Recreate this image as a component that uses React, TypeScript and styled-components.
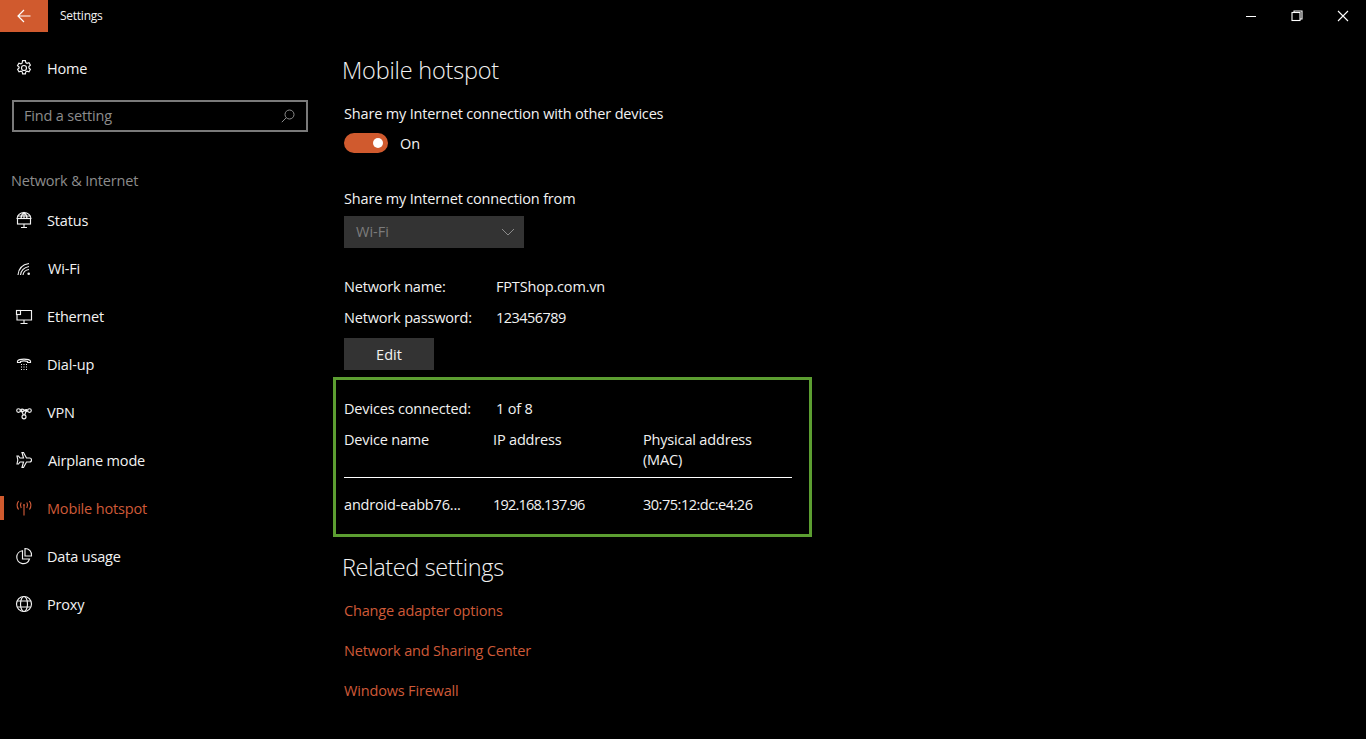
import React from 'react';
import styled, { createGlobalStyle } from 'styled-components';

const ACCENT = '#d05a2e';
const LINK = '#cf5a38';
const WHITE = '#f2f2f2';
const GRAY = '#8c8c8c';
const FONT = '"Open Sans", "Noto Sans", sans-serif';

const GlobalStyle = createGlobalStyle`
  html, body {
    margin: 0;
    height: 100%;
    background: #000;
  }
  body {
    font-family: ${FONT};
    font-size: 14px;
    color: ${WHITE};
    overflow: hidden;
  }
  * {
    box-sizing: border-box;
  }
`;

const Icon = ({ children }: { children: React.ReactNode }) => (
  <IconSvg viewBox="0 0 16 16" fill="none" stroke="currentColor" strokeWidth="1.150">
    {children}
  </IconSvg>
);

const GEAR =
  'M6.600 .600h2.800l.4 2 1.200.7 2-.6 1.400 2.400-1.500 1.400v1.400l1.500 1.400-1.400 2.400-2-.6-1.200.7-.4 2H6.600l-.4-2-1.200-.7-2 .6-1.400-2.400 1.500-1.400V7.100L1.500 5.700l1.400-2.400 2 .6 1.200-.7z';

const navItems: { label: string; icon: React.ReactNode; active?: boolean; offset?: number }[] = [
  {
    label: 'Status',
    icon: (
      <>
        <path d="M1 7a7 6.500 0 0 1 14 0" />
        <path d="M8 .500v6M1.500 4h13M5 6.500c0-2.500 1-4.500 3-6 2 1.500 3 3.500 3 6" />
        <rect x="1.500" y="6.500" width="13" height="5.500" />
        <path d="M8 12v3M5 15.500h6" />
      </>
    ),
  },
  {
    label: 'Wi-Fi',
    offset: 1,
    icon: (
      <>
        <path d="M2 15C2.500 9 6.500 4.500 13 3.500" />
        <path d="M4.500 15C5 11 8 7.500 13 6.500" />
        <path d="M7 15c.300-2.500 2.500-5 6-5.500" />
        <circle cx="12.700" cy="13.800" r="1.300" fill="currentColor" stroke="none" />
      </>
    ),
  },
  {
    label: 'Ethernet',
    icon: (
      <>
        <path d="M4.500 2.500h11v9.500H1V7" />
        <rect x=".500" y="2.500" width="4" height="4" />
        <path d="M8 12v3M4.500 15.500h7" />
      </>
    ),
  },
  {
    label: 'Dial-up',
    icon: (
      <>
        <path d="M1.500 6.500V5C3 2.500 13 2.500 14.500 5v1.500h-3V5.500c-2-.7-5-.7-7 0v1h-3z" />
        <path d="M5 8.500h1M7.500 8.500h1M10 8.500h1M5 11h1M7.500 11h1M10 11h1M5 13.500h1M7.500 13.500h1M10 13.500h1" />
      </>
    ),
  },
  {
    label: 'VPN',
    icon: (
      <>
        <circle cx="2.500" cy="6.500" r="1.800" />
        <circle cx="13.500" cy="6.500" r="1.800" />
        <circle cx="8" cy="12.800" r="2" />
        <path d="M4.300 7C6 8.500 7 7.800 8 6.800S10 5 11.700 6M4.300 6C6 4.500 7 5 8 6s2 2.300 3.700 1M5.500 6l1.800 5M10.500 6l-1.800 5" />
      </>
    ),
  },
  {
    label: 'Airplane mode',
    offset: 1,
    icon: (
      <path d="M6 .500h1.500l3 5.500h3c1 0 2 .9 2 2s-1 2-2 2h-3l-3 5.500H6L7.500 10H4l-1.500 2H1l.8-4L1 4h1.500L4 6h3.500z" />
    ),
  },
  {
    label: 'Mobile hotspot',
    active: true,
    icon: (
      <>
        <path d="M8 5.500v10" />
        <circle cx="8" cy="5" r=".9" fill="currentColor" stroke="none" />
        <path d="M5.200 2.500c-1 1.600-1 3.700 0 5.500M10.800 2.500c1 1.600 1 3.700 0 5.500" />
        <path d="M2.600 1c-1.800 2.500-1.800 6 0 8.500M13.400 1c1.800 2.500 1.800 6 0 8.500" />
      </>
    ),
  },
  {
    label: 'Data usage',
    icon: (
      <>
        <path d="M6.500 2.700a6.500 6.500 0 1 0 7 8.300H6.500z" />
        <path d="M9 .500a6.500 6.500 0 0 1 6.500 7.500H9z" />
      </>
    ),
  },
  {
    label: 'Proxy',
    icon: (
      <>
        <circle cx="8" cy="8" r="7.500" />
        <ellipse cx="8" cy="8" rx="3.500" ry="7.500" />
        <path d="M1.200 5h13.600M1.200 11h13.600" />
      </>
    ),
  },
];

const App = () => (
  <>
    <GlobalStyle />
    <Window>
      <TitleBar>
        <BackButton>
          <svg width="14" height="14" viewBox="0 0 14 14" fill="none" stroke="#fff" strokeWidth="1.200">
            <path d="M13.500 7H1M7 1L1 7l6 6" />
          </svg>
        </BackButton>
        <WindowTitle>Settings</WindowTitle>
        <WindowControls>
          <ControlButton>
            <svg width="12" height="12" viewBox="0 0 12 12" stroke="#fff" fill="none">
              <path d="M1 6.500h10" />
            </svg>
          </ControlButton>
          <ControlButton>
            <svg width="12" height="12" viewBox="0 0 12 12" stroke="#fff" fill="none" strokeWidth="1.100">
              <rect x="1" y="2.500" width="8" height="8" />
              <path d="M3 2.500V1h8v8H9" />
            </svg>
          </ControlButton>
          <ControlButton>
            <svg width="12" height="12" viewBox="0 0 12 12" stroke="#fff" fill="none" strokeWidth="1.100">
              <path d="M1 1l10 10M11 1L1 11" />
            </svg>
          </ControlButton>
        </WindowControls>
      </TitleBar>
      <Body>
        <Sidebar>
          <HomeRow>
            <Icon>
              <path d={GEAR} />
              <circle cx="8" cy="8" r="2.500" />
            </Icon>
            <NavLabel>Home</NavLabel>
          </HomeRow>
          <SearchBox>
            <SearchText>Find a setting</SearchText>
            <svg width="14" height="14" viewBox="0 0 14 14" fill="none" stroke="#8c8c8c">
              <circle cx="8.500" cy="5.500" r="4.500" />
              <path d="M5.300 8.700L.8 13.200" />
            </svg>
          </SearchBox>
          <SectionLabel>Network &amp; Internet</SectionLabel>
          <NavList>
            {navItems.map((item) => (
              <NavItem key={item.label} $active={item.active}>
                <Icon>{item.icon}</Icon>
                <NavLabel $offset={item.offset}>{item.label}</NavLabel>
              </NavItem>
            ))}
          </NavList>
        </Sidebar>
        <Main>
          <PageTitle>Mobile hotspot</PageTitle>
          <Line>Share my Internet connection with other devices</Line>
          <ToggleRow>
            <Toggle />
            <span>On</span>
          </ToggleRow>
          <FromLabel>Share my Internet connection from</FromLabel>
          <Select>
            <SelectValue>Wi-Fi</SelectValue>
            <svg width="14" height="8" viewBox="0 0 14 8" fill="none" stroke="#8c8c8c">
              <path d="M1 1l6 6 6-6" />
            </svg>
          </Select>
          <NetworkRow>
            <InfoKey>Network name:</InfoKey>
            <span>FPTShop.com.vn</span>
          </NetworkRow>
          <PasswordRow>
            <InfoKey>Network password:</InfoKey>
            <PasswordValue>123456789</PasswordValue>
          </PasswordRow>
          <EditButton>Edit</EditButton>
          <DevicesFrame>
            <ConnectedRow>
              <InfoKey>Devices connected:</InfoKey>
              <span>1 of 8</span>
            </ConnectedRow>
            <DeviceHead>
              <span>Device name</span>
              <span>IP address</span>
              <span>
                Physical address
                <br />
                (MAC)
              </span>
            </DeviceHead>
            <DeviceRow>
              <span>android-eabb76...</span>
              <IpText>192.168.137.96</IpText>
              <MacText>30:75:12:dc:e4:26</MacText>
            </DeviceRow>
          </DevicesFrame>
          <SectionTitle>Related settings</SectionTitle>
          <RelatedLink>Change adapter options</RelatedLink>
          <RelatedLink>Network and Sharing Center</RelatedLink>
          <RelatedLink>Windows Firewall</RelatedLink>
        </Main>
      </Body>
    </Window>
  </>
);

export default App;

const Window = styled.div`
  width: 1366px;
  height: 739px;
  background: #000;
`;

const TitleBar = styled.div`
  display: flex;
  align-items: center;
  height: 32px;
`;

const BackButton = styled.div`
  display: flex;
  justify-content: center;
  align-items: center;
  width: 48px;
  height: 32px;
  background: ${ACCENT};
`;

const WindowTitle = styled.div`
  margin-left: 12px;
  font-size: 12px;
  line-height: 32px;
  letter-spacing: -0.250px;
`;

const WindowControls = styled.div`
  display: flex;
  margin-left: auto;
`;

const ControlButton = styled.div`
  display: flex;
  justify-content: center;
  align-items: center;
  width: 46px;
  height: 32px;
`;

const Body = styled.div`
  display: flex;
`;

const Sidebar = styled.nav`
  width: 320px;
  padding-top: 12px;
`;

const IconSvg = styled.svg`
  flex: none;
  width: 16px;
  height: 16px;
  overflow: visible;
`;

const NavLabel = styled.span<{ $offset?: number }>`
  margin-left: ${(p) => 15 + (p.$offset || 0)}px;
  font-size: 14.500px;
  letter-spacing: -0.170px;
`;

const HomeRow = styled.div`
  display: flex;
  align-items: center;
  height: 48px;
  padding-left: 16px;
`;

const SearchBox = styled.div`
  display: flex;
  justify-content: space-between;
  align-items: center;
  width: 296px;
  height: 32px;
  margin: 8px 0 0 12px;
  padding: 0 11px 0 10px;
  border: 2px solid #7a7a7a;
`;

const SearchText = styled.span`
  margin-top: -2px;
  font-size: 14.500px;
  letter-spacing: -0.170px;
  color: ${GRAY};
`;

const SectionLabel = styled.div`
  margin: 39px 0 0 11px;
  font-size: 14.500px;
  line-height: 20px;
  letter-spacing: -0.170px;
  color: ${GRAY};
`;

const NavList = styled.div`
  margin-top: 5px;
`;

const NavItem = styled.div<{ $active?: boolean }>`
  position: relative;
  display: flex;
  align-items: center;
  height: 48px;
  padding-left: 16px;
  color: ${(p) => (p.$active ? LINK : WHITE)};

  &::before {
    content: '';
    display: ${(p) => (p.$active ? 'block' : 'none')};
    position: absolute;
    left: 0;
    top: 12px;
    width: 4px;
    height: 24px;
    background: ${ACCENT};
  }
`;

const Main = styled.main`
  width: 480px;
  padding-left: 24px;
`;

const PageTitle = styled.h1`
  margin: 18px 0 0 -2px;
  font-size: 23.500px;
  font-weight: 300;
  line-height: 40px;
  letter-spacing: -0.200px;
`;

const Line = styled.div`
  margin-top: 14px;
  font-size: 14.500px;
  line-height: 20px;
  letter-spacing: -0.170px;
`;

const ToggleRow = styled.div`
  display: flex;
  align-items: center;
  gap: 12px;
  height: 20px;
  margin-top: 9px;
  font-size: 14.500px;
`;

const Toggle = styled.div`
  position: relative;
  width: 44px;
  height: 20px;
  border-radius: 10px;
  background: ${ACCENT};

  &::after {
    content: '';
    position: absolute;
    top: 5px;
    right: 5px;
    width: 10px;
    height: 10px;
    border-radius: 50%;
    background: #fff;
  }
`;

const FromLabel = styled(Line)`
  margin-top: 36px;
`;

const Select = styled.div`
  display: flex;
  justify-content: space-between;
  align-items: center;
  width: 180px;
  height: 32px;
  margin-top: 7px;
  padding: 0 9px 0 12px;
  background: #333;
  color: #7c7c7c;
  font-size: 14.500px;
`;

const SelectValue = styled.span`
  margin-top: -2px;
`;

const InfoRow = styled.div`
  display: flex;
  font-size: 14.500px;
  line-height: 20px;
  letter-spacing: -0.170px;
`;

const NetworkRow = styled(InfoRow)`
  margin-top: 29px;
`;

const PasswordRow = styled(InfoRow)`
  margin-top: 11px;
`;

const ConnectedRow = styled(InfoRow)`
  margin-top: 19px;
`;

const InfoKey = styled.span`
  width: 152px;
`;

const PasswordValue = styled.span`
  letter-spacing: -0.550px;
`;

const IpText = styled.span`
  letter-spacing: -0.800px;
`;

const MacText = styled.span`
  letter-spacing: -0.480px;
`;

const EditButton = styled.div`
  display: flex;
  justify-content: center;
  align-items: center;
  width: 90px;
  height: 32px;
  margin-top: 10px;
  background: #333;
  font-size: 14.500px;
`;

const DevicesFrame = styled.section`
  width: 479px;
  height: 160px;
  margin: 7px 0 0 -11px;
  padding: 0 17px 0 8px;
  border: 3px solid #5c9e31;
`;

const DeviceColumns = styled.div`
  display: grid;
  grid-template-columns: 149px 150px 1fr;
  font-size: 14.500px;
  line-height: 20px;
  letter-spacing: -0.170px;
`;

const DeviceHead = styled(DeviceColumns)`
  margin-top: 11px;
  padding-bottom: 7px;
  border-bottom: 1px solid #fff;
`;

const DeviceRow = styled(DeviceColumns)`
  margin-top: 17px;
`;

const SectionTitle = styled.h2`
  margin: 10px 0 0 -2px;
  font-size: 23.500px;
  font-weight: 300;
  line-height: 40px;
  letter-spacing: -0.350px;
`;

const RelatedLink = styled.div`
  margin-top: 20px;
  font-size: 14.500px;
  line-height: 20px;
  letter-spacing: -0.170px;
  color: ${LINK};

  ${SectionTitle} + & {
    margin-top: 14px;
  }
`;
